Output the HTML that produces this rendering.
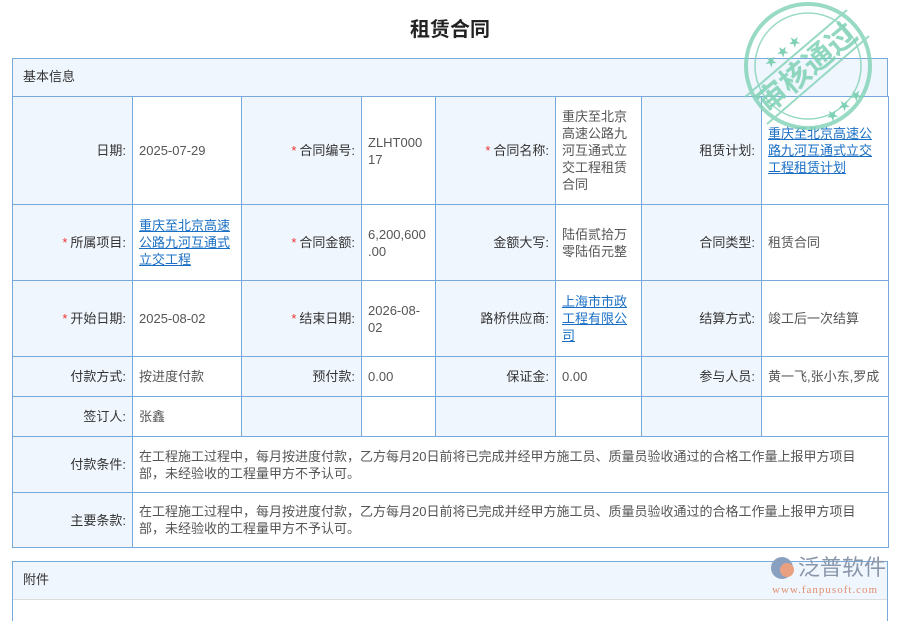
<!DOCTYPE html>
<html><head><meta charset="utf-8"><style>
body{margin:0;width:900px;height:600px;overflow:hidden;background:#fff;font-family:"Liberation Sans","Noto Sans CJK SC",sans-serif;font-size:13px;color:#333;position:relative}
h1{position:absolute;left:0;width:900px;top:13px;margin:0;text-align:center;font-size:20px;font-weight:bold;color:#222}
.box{position:absolute;left:12px;width:876px;border:1px solid #77aadb;box-sizing:border-box}
.hd{background:#f0f6fe;height:37px;line-height:36px;padding-left:10px;color:#333}
table{border-collapse:collapse;width:876px;table-layout:fixed;margin-left:-1px}
td{border:1px solid #77aadb;padding:0 6px;line-height:17px;vertical-align:middle;word-break:break-all}
td.l{background:#f0f6fe;text-align:right;color:#333}
td.v{background:#fff;color:#555}
td.w{padding-right:26px}
.s{color:#e33;margin-right:3px}
a{color:#1a6fc4;text-decoration:underline}
</style></head><body>
<h1>租赁合同</h1>
<div class="box" style="top:58px;height:489px">
<div class="hd">基本信息</div>
<table>
<colgroup><col style="width:120px"><col style="width:109px"><col style="width:120px"><col style="width:74px"><col style="width:120px"><col style="width:86px"><col style="width:120px"><col style="width:127px"></colgroup>
<tr style="height:108px"><td class="l">日期:</td><td class="v">2025-07-29</td><td class="l"><span class="s">*</span>合同编号:</td><td class="v">ZLHT000<br>17</td><td class="l"><span class="s">*</span>合同名称:</td><td class="v">重庆至北京高速公路九河互通式立交工程租赁合同</td><td class="l">租赁计划:</td><td class="v"><a>重庆至北京高速公路九河互通式立交工程租赁计划</a></td></tr>
<tr style="height:76px"><td class="l"><span class="s">*</span>所属项目:</td><td class="v"><a>重庆至北京高速公路九河互通式立交工程</a></td><td class="l"><span class="s">*</span>合同金额:</td><td class="v">6,200,600<br>.00</td><td class="l">金额大写:</td><td class="v">陆佰贰拾万零陆佰元整</td><td class="l">合同类型:</td><td class="v">租赁合同</td></tr>
<tr style="height:76px"><td class="l"><span class="s">*</span>开始日期:</td><td class="v">2025-08-02</td><td class="l"><span class="s">*</span>结束日期:</td><td class="v">2026-08-<br>02</td><td class="l">路桥供应商:</td><td class="v"><a>上海市市政工程有限公司</a></td><td class="l">结算方式:</td><td class="v">竣工后一次结算</td></tr>
<tr style="height:40px"><td class="l">付款方式:</td><td class="v">按进度付款</td><td class="l">预付款:</td><td class="v">0.00</td><td class="l">保证金:</td><td class="v">0.00</td><td class="l">参与人员:</td><td class="v" style="white-space:nowrap">黄一飞,张小东,罗成</td></tr>
<tr style="height:40px"><td class="l">签订人:</td><td class="v">张鑫</td><td class="l"></td><td class="v"></td><td class="l"></td><td class="v"></td><td class="l"></td><td class="v"></td></tr>
<tr style="height:56px"><td class="l">付款条件:</td><td class="v w" colspan="7">在工程施工过程中，每月按进度付款，乙方每月20日前将已完成并经甲方施工员、质量员验收通过的合格工作量上报甲方项目部，未经验收的工程量甲方不予认可。</td></tr>
<tr style="height:55px"><td class="l">主要条款:</td><td class="v w" colspan="7">在工程施工过程中，每月按进度付款，乙方每月20日前将已完成并经甲方施工员、质量员验收通过的合格工作量上报甲方项目部，未经验收的工程量甲方不予认可。</td></tr>
</table>
</div>
<div class="box" style="top:561px;height:60px;border-bottom:none">
<div class="hd">附件</div>
<div style="border-top:1px solid #ddd"></div>
</div>
<svg style="position:absolute;left:735px;top:2px" width="150" height="135" viewBox="0 0 150 135">
<g fill="none" stroke="#7fd1b5" opacity="0.8">
<circle cx="73" cy="64" r="62" stroke-width="4"/>
<circle cx="73" cy="64" r="53" stroke-width="1.5"/>
<line x1="10" y1="95" x2="112" y2="8" stroke-width="2"/>
<line x1="32" y1="122" x2="134" y2="34" stroke-width="2"/>
</g>
<text x="72" y="76" transform="rotate(-40 72 66)" text-anchor="middle" font-size="30" font-weight="bold" fill="#7fd1b5" opacity="0.85" font-family="Liberation Sans,Noto Sans CJK SC,sans-serif">审核通过</text>
<text x="28" y="60" font-size="12" fill="#7fd1b5" transform="rotate(-40 40 55)">★ ★ ★</text>
<text x="90" y="115" font-size="12" fill="#7fd1b5" transform="rotate(-40 100 110)">★ ★ ★</text>
</svg>
<div style="position:absolute;left:768px;top:553px;width:130px;height:47px;white-space:nowrap">
<div style="position:absolute;left:3px;top:4px;width:22px;height:22px;border-radius:50%;background:#8aa0c0"></div>
<div style="position:absolute;left:12px;top:10px;width:14px;height:14px;border-radius:50%;background:#e8a080"></div>
<div style="position:absolute;left:30px;top:0;font-size:22px;line-height:30px;color:#8a96aa">泛普软件</div>
<div style="position:absolute;left:4px;top:31px;font-size:11px;color:#e09070;font-family:'Liberation Serif',serif;letter-spacing:1px">www.fanpusoft.com</div>
</div>
</body></html>
